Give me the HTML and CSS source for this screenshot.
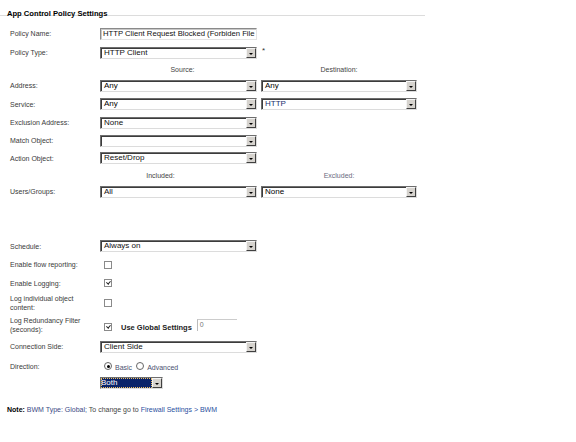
FILE: index.html
```html
<!DOCTYPE html>
<html>
<head>
<meta charset="utf-8">
<link rel="stylesheet" href="styles.css">
</head>
<body>
<div class="page">
  <div class="header"><span class="title">App Control Policy Settings</span></div>

  <div class="row h19 first">
    <div class="label">Policy Name:</div>
    <div class="input w1"><span class="val b">HTTP Client Request Blocked (Forbiden File</span></div>
  </div>

  <div class="row h19">
    <div class="label">Policy Type:</div>
    <div class="sel w1"><span class="val b">HTTP Client</span><span class="btn"></span></div>
    <span class="star">*</span>
  </div>

  <div class="row h14">
    <div class="label"></div>
    <div class="colhead w1 src">Source:</div>
    <div class="colhead w2 dst">Destination:</div>
  </div>

  <div class="row h19">
    <div class="label">Address:</div>
    <div class="sel w1"><span class="val">Any</span><span class="btn"></span></div>
    <div class="sel w2"><span class="val">Any</span><span class="btn"></span></div>
  </div>

  <div class="row h18">
    <div class="label">Service:</div>
    <div class="sel w1"><span class="val">Any</span><span class="btn"></span></div>
    <div class="sel w2"><span class="val blue">HTTP</span><span class="btn"></span></div>
  </div>

  <div class="row h19">
    <div class="label">Exclusion Address:</div>
    <div class="sel w1"><span class="val b">None</span><span class="btn"></span></div>
  </div>

  <div class="row h17">
    <div class="label">Match Object:</div>
    <div class="sel w1"><span class="val"></span><span class="btn"></span></div>
  </div>

  <div class="row h18">
    <div class="label">Action Object:</div>
    <div class="sel w1"><span class="val b">Reset/Drop</span><span class="btn"></span></div>
  </div>

  <div class="row h17">
    <div class="label"></div>
    <div class="colhead w1 inc">Included:</div>
    <div class="colhead w2 exc">Excluded:</div>
  </div>

  <div class="row h15">
    <div class="label">Users/Groups:</div>
    <div class="sel w1"><span class="val b">All</span><span class="btn"></span></div>
    <div class="sel w2"><span class="val">None</span><span class="btn"></span></div>
  </div>

  <div class="row h18 sched">
    <div class="label">Schedule:</div>
    <div class="sel w1"><span class="val b">Always on</span><span class="btn"></span></div>
  </div>

  <div class="row h19">
    <div class="label">Enable flow reporting:</div>
    <span class="cb"></span>
  </div>

  <div class="row h18">
    <div class="label">Enable Logging:</div>
    <span class="cb checked"></span>
  </div>

  <div class="row h21">
    <div class="label">Log individual object content:</div>
    <span class="cb"></span>
  </div>

  <div class="row h24">
    <div class="label">Log Redundancy Filter (seconds):</div>
    <span class="cb checked low"></span>
    <span class="global">Use Global Settings</span>
    <span class="num">0</span>
  </div>

  <div class="row h19">
    <div class="label">Connection Side:</div>
    <div class="sel w1"><span class="val b">Client Side</span><span class="btn"></span></div>
  </div>

  <div class="row h20">
    <div class="label">Direction:</div>
    <span class="radio on"></span><span class="rlabel">Basic</span>
    <span class="radio"></span><span class="rlabel">Advanced</span>
  </div>

  <div class="row h13">
    <div class="label"></div>
    <div class="sel both"><span class="val sel-hl">Both</span><span class="btn"></span></div>
  </div>

  <div class="note">
    <b>Note:</b> <span class="slate">BWM Type: Global;</span> <span class="gray">To change go to</span> <span class="link">Firewall Settings &gt; BWM</span>
  </div>
</div>
</body>
</html>
```

FILE: styles.css
```css
html, body {
  margin: 0;
  padding: 0;
  background: #fff;
}

.page {
  width: 576px;
  height: 442px;
  font-family: "Liberation Sans", Arial, sans-serif;
  color: #333;
}

.header {
  box-sizing: border-box;
  width: 425px;
  height: 16px;
  padding-left: 7px;
  padding-top: 6px;
  line-height: 10px;
  border-bottom: 1px solid #dcdcdc;
}

.title {
  font-size: 7.6px;
  font-weight: bold;
  color: #000;
}

.row {
  display: flex;
  align-items: center;
}
.row.first { margin-top: 8px; }
.row.sched { margin-top: 38px; }

.h13 { height: 13px; }
.h14 { height: 14px; }
.h15 { height: 15px; }
.h17 { height: 17px; }
.h18 { height: 18px; }
.h19 { height: 19px; }
.h20 { height: 20px; }
.h21 { height: 21px; }
.h24 { height: 24px; }

.label {
  width: 80px;
  padding-left: 10px;
  margin-right: 10px;
  font-size: 7px;
  line-height: 9px;
  color: #3a3a3a;
  flex: none;
}

.w1 { width: 157px; }
.w2 { width: 156px; margin-left: 4px; }

.sel, .input {
  box-sizing: border-box;
  height: 12px;
  display: flex;
  align-items: stretch;
  background: #fff;
  border: 1px solid;
  border-color: #6e6e6e #dcdcdc #dcdcdc #6e6e6e;
  box-shadow: inset 1px 1px 0 #3c3c3c;
  flex: none;
}
.input {
  border-color: #8a8a8a #e4e4e4 #e4e4e4 #8a8a8a;
  box-shadow: inset 1px 1px 0 #c8c8c8;
}

.val {
  flex: 1;
  padding-left: 3px;
  font-size: 8px;
  line-height: 10px;
  color: #000;
  white-space: nowrap;
  overflow: hidden;
}
.input .val {
  padding-left: 2px;
  font-size: 7.7px;
}
.val.b { color: #111; }
.val.blue { color: #1a2f6e; }

.btn {
  width: 10px;
  flex: none;
  box-sizing: border-box;
  background: #d6d3ce;
  border: 1px solid;
  border-color: #f4f4f4 #404040 #404040 #f4f4f4;
  position: relative;
}
.btn::after {
  content: "";
  position: absolute;
  left: 2px;
  top: 4px;
  border-left: 2px solid transparent;
  border-right: 2px solid transparent;
  border-top: 2px solid #000;
}

.star {
  font-size: 8px;
  margin-left: 5px;
  margin-top: -4px;
  color: #333;
}

.colhead {
  font-size: 7px;
  color: #444;
  text-align: center;
}
.src { padding-left: 8px; box-sizing: border-box; }
.inc { padding-right: 36px; box-sizing: border-box; }
.exc { color: #6a6a80; }

.cb {
  width: 6px;
  height: 6px;
  border: 1px solid #8a8a8a;
  background: #fff;
  margin-left: 4px;
  position: relative;
  flex: none;
}
.cb.checked::after {
  content: "";
  position: absolute;
  left: 1.5px;
  top: 0px;
  width: 1.5px;
  height: 3px;
  border-right: 1px solid #222;
  border-bottom: 1px solid #222;
  transform: rotate(40deg);
}
.cb.low { margin-top: 3px; }

.global {
  font-size: 7.5px;
  font-weight: bold;
  color: #222;
  margin-left: 9px;
  margin-top: 4px;
}
.num {
  width: 40px;
  height: 12px;
  box-sizing: border-box;
  margin-left: 5px;
  border-left: 1px solid #bbb;
  border-top: 1px solid #ccc;
  font-size: 7px;
  line-height: 10px;
  padding-left: 2px;
  color: #777;
}

.radio {
  width: 6px;
  height: 6px;
  border-radius: 50%;
  border: 1px solid #666;
  background: #fff;
  margin-left: 4px;
  position: relative;
  flex: none;
}
.radio.on::after {
  content: "";
  position: absolute;
  left: 1.5px;
  top: 1.5px;
  width: 3px;
  height: 3px;
  border-radius: 50%;
  background: #000;
}
.rlabel {
  font-size: 7px;
  color: #4a5070;
  margin-left: 3px;
  margin-top: 2px;
}

.both { width: 63px; }
.both .val { padding-left: 0; }
.sel-hl {
  background: #0a246a;
  color: #fff;
  outline: 1px dotted #f0c060;
  outline-offset: -1px;
  padding-left: 2px;
}

.note {
  margin-top: 14px;
  padding-left: 7px;
  font-size: 7px;
  line-height: 14px;
  color: #444;
}
.note b { color: #000; }
.slate { color: #3b4a85; }
.gray { color: #444; }
.link { color: #2a4fa0; }
```
